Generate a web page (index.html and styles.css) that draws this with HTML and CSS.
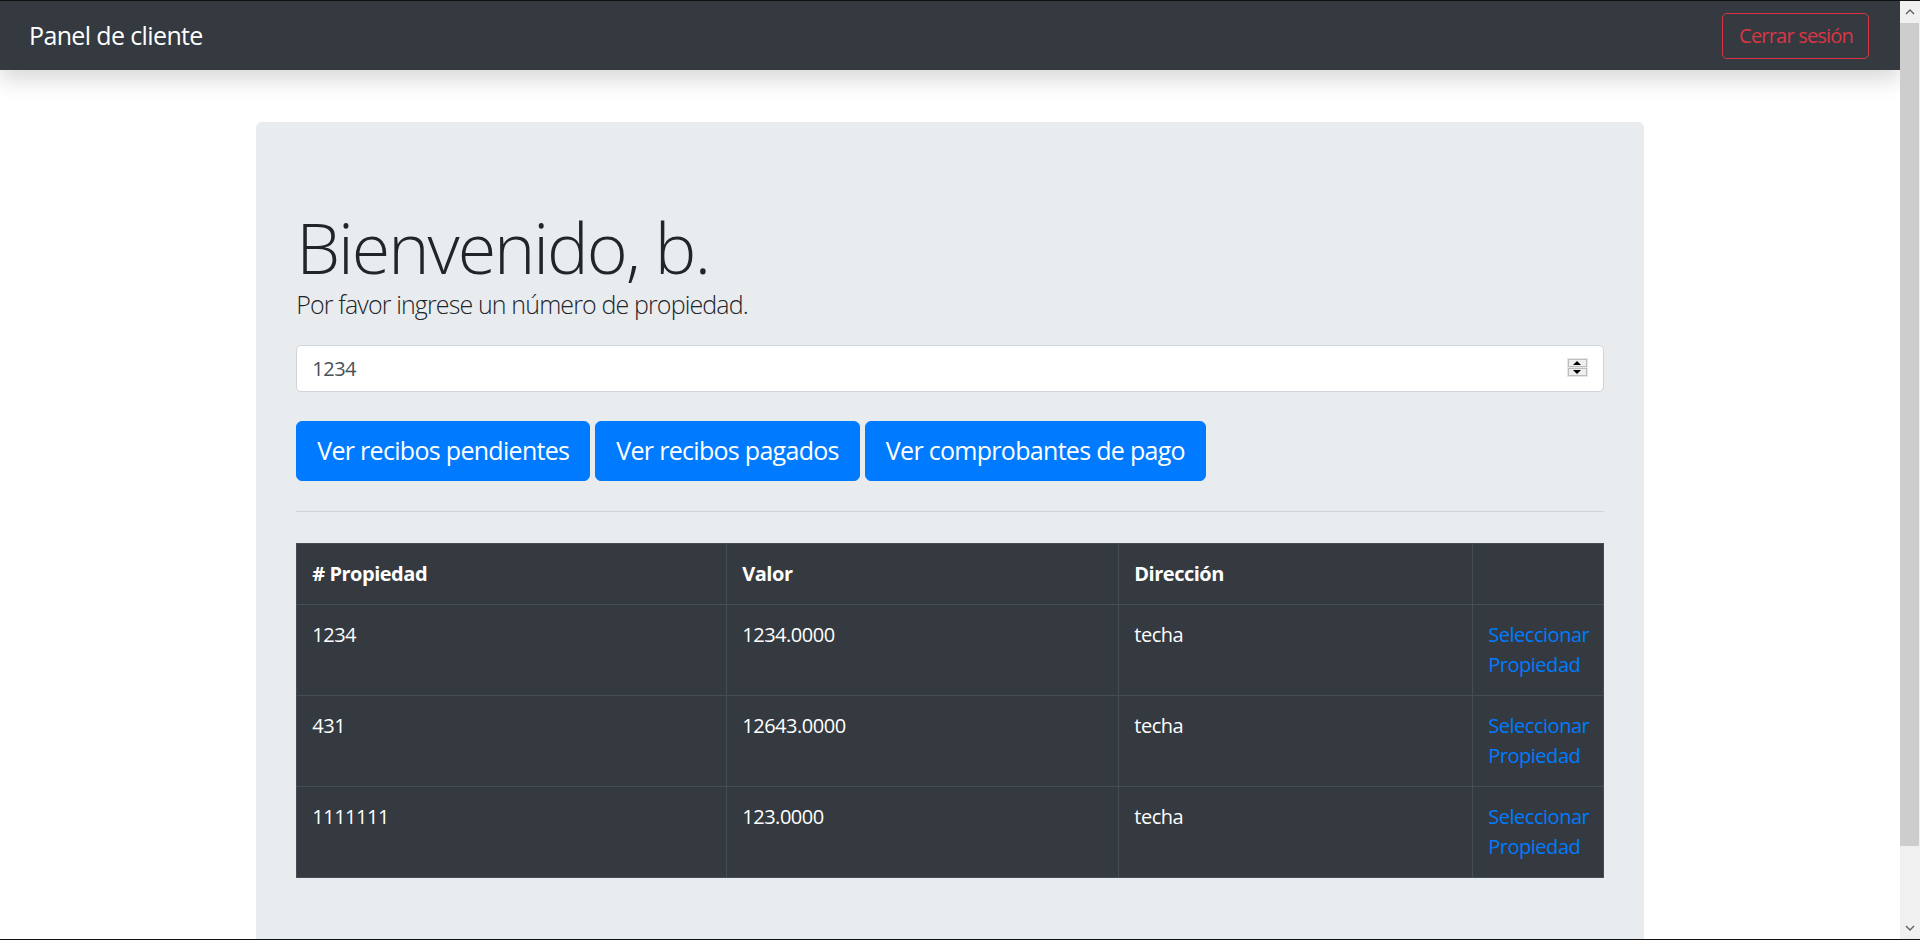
FILE: index.html
```html
<!DOCTYPE html>
<html lang="es">
<head>
<meta charset="utf-8">
<title>Panel de cliente</title>
<link rel="stylesheet" href="styles.css">
</head>
<body>
<div class="frame">
  <div class="viewport">
    <nav class="navbar">
      <a class="brand" href="#">Panel de cliente</a>
      <button class="btn-logout" type="button">Cerrar sesión</button>
    </nav>
    <main class="container">
      <section class="jumbotron">
        <h1 class="display">Bienvenido, b.</h1>
        <p class="lead">Por favor ingrese un número de propiedad.</p>
        <div class="field">
          <input class="form-control" type="text" value="1234">
          <span class="spinner"><span class="spin spin-up"></span><span class="spin spin-down"></span></span>
        </div>
        <div class="actions">
          <button class="btn" type="button">Ver recibos pendientes</button>
          <button class="btn" type="button">Ver recibos pagados</button>
          <button class="btn" type="button">Ver comprobantes de pago</button>
        </div>
        <hr class="divider">
        <table class="table">
          <colgroup>
            <col class="c1"><col class="c2"><col class="c3"><col class="c4">
          </colgroup>
          <thead>
            <tr><th># Propiedad</th><th>Valor</th><th>Dirección</th><th></th></tr>
          </thead>
          <tbody>
            <tr><td>1234</td><td>1234.0000</td><td>techa</td><td><a class="link" href="#">Seleccionar Propiedad</a></td></tr>
            <tr><td>431</td><td>12643.0000</td><td>techa</td><td><a class="link" href="#">Seleccionar Propiedad</a></td></tr>
            <tr><td>1111111</td><td>123.0000</td><td>techa</td><td><a class="link" href="#">Seleccionar Propiedad</a></td></tr>
          </tbody>
        </table>
      </section>
    </main>
  </div>
  <div class="scrollbar">
    <div class="sb-arrow"><svg width="10" height="6" viewBox="0 0 10 6"><path d="M1 5 L5 1 L9 5" fill="none" stroke="#606060" stroke-width="1.4"/></svg></div>
    <div class="sb-thumb"></div>
    <div class="sb-track"></div>
    <div class="sb-arrow"><svg width="10" height="6" viewBox="0 0 10 6"><path d="M1 1 L5 5 L9 1" fill="none" stroke="#606060" stroke-width="1.4"/></svg></div>
  </div>
</div>
</body>
</html>
```

FILE: styles.css
```css
html, body {
  margin: 0;
  padding: 0;
}
body {
  overflow: hidden;
  font-family: "Open Sans", "Noto Sans", "DejaVu Sans", sans-serif;
  color: #212529;
  letter-spacing: -0.48px;
}
.frame {
  display: flex;
  height: 940px;
  box-sizing: border-box;
  border-top: 1px solid #111;
  border-bottom: 1px solid #111;
  overflow: hidden;
}
.viewport {
  flex: 1;
  min-width: 0;
  overflow: hidden;
  background: #fff;
}
.scrollbar {
  width: 20px;
  display: flex;
  flex-direction: column;
  background: #f0f0f0;
}
.sb-arrow {
  height: 22px;
  display: flex;
  align-items: center;
  justify-content: center;
}
.sb-thumb {
  height: 823px;
  margin-right: 1px;
  background: #cdcdcd;
}
.sb-track {
  flex: 1;
}

/* navbar */
.navbar {
  position: relative;
  z-index: 1;
  height: 69px;
  box-sizing: border-box;
  padding: 0 31px 0 29px;
  display: flex;
  align-items: center;
  justify-content: space-between;
  background: #343a40;
  box-shadow: 0 10px 20px rgba(0, 0, 0, 0.15);
}
.brand {
  color: #fff;
  font-size: 25px;
  line-height: 37.5px;
  letter-spacing: -0.63px;
  text-decoration: none;
}
.btn-logout {
  height: 46px;
  padding: 0 15px 0 16px;
  font-family: inherit;
  letter-spacing: -0.8px;
  font-size: 20px;
  color: #dc3545;
  background: transparent;
  border: 1px solid #dc3545;
  border-radius: 5px;
}

/* content */
.container {
  max-width: 1425px;
  box-sizing: border-box;
  margin: 52px auto 0;
  padding: 0 18.75px;
}
.jumbotron {
  background: #e9ecef;
  border-radius: 6px;
  padding: 84px 40px 80px;
}
.display {
  margin: 0;
  font-size: 70px;
  font-weight: 300;
  line-height: 82px;
  letter-spacing: -2.05px;
}
.lead {
  margin: 0 0 25px;
  font-size: 25px;
  font-weight: 300;
  line-height: 32px;
  letter-spacing: -0.87px;
}
.field {
  position: relative;
}
.form-control {
  display: block;
  width: 100%;
  height: 47px;
  box-sizing: border-box;
  padding: 0 15px;
  font-family: inherit;
  letter-spacing: -0.48px;
  font-size: 20px;
  color: #495057;
  background: #fff;
  border: 1px solid #ced4da;
  border-radius: 5px;
  outline: none;
}
.spinner {
  position: absolute;
  right: 16px;
  top: 13px;
  width: 19px;
  display: flex;
  flex-direction: column;
  gap: 1px;
  padding: 1px;
  background: #e6e6e6;
}
.spin {
  position: relative;
  height: 8px;
  box-sizing: border-box;
  border: 1px solid #bdbdbd;
  background: #efefef;
}
.spin::after {
  content: "";
  position: absolute;
  left: 4px;
  width: 0;
  height: 0;
  border-left: 4px solid transparent;
  border-right: 4px solid transparent;
}
.spin-up::after {
  top: 1px;
  border-bottom: 4px solid #000;
}
.spin-down::after {
  top: 1px;
  border-top: 4px solid #000;
}
.actions {
  display: flex;
  gap: 5px;
  margin-top: 29px;
}
.btn {
  height: 60px;
  padding: 0 20px;
  font-family: inherit;
  letter-spacing: -0.7px;
  font-size: 25px;
  line-height: 37.5px;
  color: #fff;
  background: #007bff;
  border: 1px solid #007bff;
  border-radius: 6px;
}
.divider {
  margin: 30px 0 31px;
  border: 0;
  border-top: 1px solid rgba(0, 0, 0, 0.1);
}
.table {
  width: 100%;
  border-collapse: collapse;
  table-layout: fixed;
  background: #343a40;
  color: #fff;
  font-size: 20px;
  line-height: 30px;
}
.c1 { width: 430px; }
.c2 { width: 392px; }
.c3 { width: 354px; }
.table th,
.table td {
  padding: 15px;
  border: 1px solid #454d55;
  text-align: left;
  vertical-align: top;
}
.table th {
  font-weight: 700;
}
.link {
  color: #007bff;
  text-decoration: none;
}
```
